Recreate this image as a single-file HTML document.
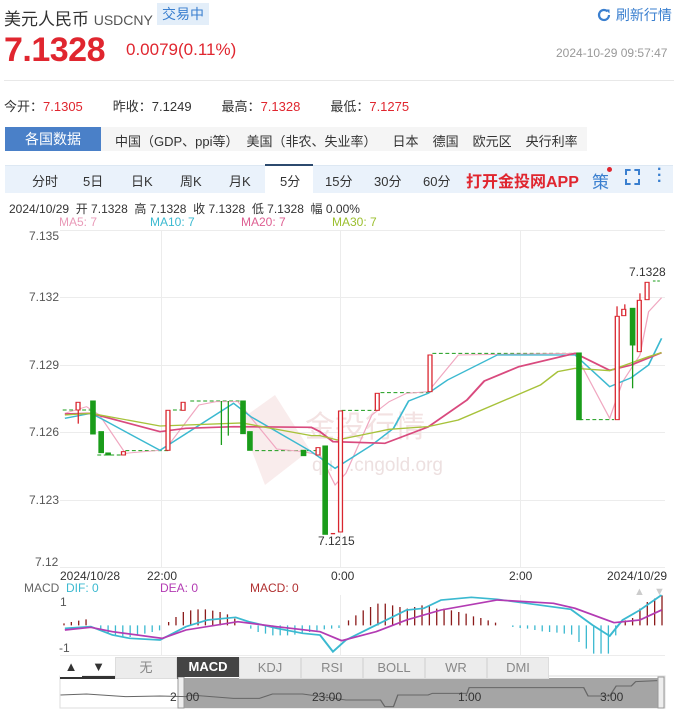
<!DOCTYPE html><html><head><meta charset="utf-8"><style>
*{margin:0;padding:0;box-sizing:border-box}
body{width:678px;height:710px;background:#fff;font-family:"Liberation Sans","Noto Sans CJK SC",sans-serif;position:relative;overflow:hidden;color:#333}
.a{position:absolute;white-space:nowrap}
.r{color:#e0262f}
</style></head><body>
<div class="a" style="left:4px;top:5px;font-size:17px;color:#333">美元人民币 <span style="font-size:14px;color:#555">USDCNY</span></div>
<div class="a" style="left:157px;top:3px;width:52px;height:22px;background:#e3eef9;color:#3a7fcf;font-size:14px;line-height:22px;text-align:center">交易中</div>
<div class="a" style="left:596px;top:5px;font-size:14px;color:#3a7fcf"><svg width="16" height="16" viewBox="0 0 16 16" style="vertical-align:-3px"><path d="M13 8a5 5 0 1 1-1.5-3.6" fill="none" stroke="#3a7fcf" stroke-width="2.2"/><path d="M9.5 2.5h4v4z" fill="#3a7fcf"/></svg> 刷新行情</div>
<div class="a r" style="left:4px;top:31px;font-size:34px;font-weight:bold;letter-spacing:-0.5px">7.1328</div>
<div class="a r" style="left:126px;top:40px;font-size:17px">0.0079(0.11%)</div>
<div class="a" style="left:556px;top:46px;font-size:12px;color:#999">2024-10-29 09:57:47</div>
<div class="a" style="left:4px;top:80px;width:670px;border-top:1px solid #e8e8e8"></div>
<div class="a" style="left:4px;top:96px;font-size:13px">今开：<span class="r">7.1305</span><span style="display:inline-block;width:30px"></span>昨收：7.1249<span style="display:inline-block;width:30px"></span>最高：<span class="r">7.1328</span><span style="display:inline-block;width:30px"></span>最低：<span class="r">7.1275</span></div>
<div class="a" style="left:5px;top:127px;width:96px;height:24px;background:#4a80c8;color:#fff;font-size:14px;line-height:24px;text-align:center">各国数据</div>
<div class="a" style="left:101px;top:127px;width:486px;height:24px;background:#f5f5f5"></div>
<div class="a" style="left:115px;top:131px;font-size:13px;word-spacing:0">中国（GDP、ppi等）<span style="display:inline-block;width:8px"></span>美国（非农、失业率）<span style="display:inline-block;width:16px"></span>日本<span style="display:inline-block;width:14px"></span>德国<span style="display:inline-block;width:14px"></span>欧元区<span style="display:inline-block;width:14px"></span>央行利率</div>
<div class="a" style="left:5px;top:165px;width:668px;height:28px;background:#eaf2fb;border-top:1px solid #dde8f3"></div>
<div class="a" style="left:265px;top:164px;width:48px;height:29px;background:#fff;border-top:2px solid #2c4a6e"></div>
<div class="a" style="left:0;top:171px;font-size:13px;width:678px">
<span class="a" style="left:32px">分时</span><span class="a" style="left:83px">5日</span><span class="a" style="left:131px">日K</span><span class="a" style="left:180px">周K</span><span class="a" style="left:229px">月K</span><span class="a" style="left:280px">5分</span><span class="a" style="left:325px">15分</span><span class="a" style="left:374px">30分</span><span class="a" style="left:423px">60分</span>
<span class="a r" style="left:466px;top:-3px;font-size:16px;font-weight:bold">打开金投网APP</span>
<span class="a" style="left:592px;top:-3px;font-size:17px;color:#3a7fcf">策</span><span class="a" style="left:607px;top:-4px;width:5px;height:5px;border-radius:50%;background:#e0262f"></span>
<span class="a" style="left:625px;top:-2px;width:15px;height:16px;border:2px dashed #3a7fcf;border-width:2px"></span>
<span class="a" style="left:657px;top:-4px;color:#3a7fcf;font-size:16px;line-height:6px;font-weight:bold">·<br>·<br>·</span>
</div>
<div class="a" style="left:9px;top:200px;font-size:12px">2024/10/29 &nbsp;开 7.1328 &nbsp;高 7.1328 &nbsp;收 7.1328 &nbsp;低 7.1328 &nbsp;幅 0.00%</div>
<div class="a" style="left:59px;top:215px;font-size:12px;color:#e99ab8">MA5: 7</div>
<div class="a" style="left:150px;top:215px;font-size:12px;color:#3bb9d0">MA10: 7</div>
<div class="a" style="left:241px;top:215px;font-size:12px;color:#de5f92">MA20: 7</div>
<div class="a" style="left:332px;top:215px;font-size:12px;color:#9bbf2e">MA30: 7</div>
<div class="a" style="left:29px;top:229px;font-size:12px;color:#555;line-height:14px">7.135</div>
<div class="a" style="left:29px;top:290px;font-size:12px;color:#555">7.132</div>
<div class="a" style="left:29px;top:358px;font-size:12px;color:#555">7.129</div>
<div class="a" style="left:29px;top:425px;font-size:12px;color:#555">7.126</div>
<div class="a" style="left:29px;top:493px;font-size:12px;color:#555">7.123</div>
<div class="a" style="left:35px;top:555px;font-size:12px;color:#555">7.12</div>
<div class="a" style="left:629px;top:265px;font-size:12px">7.1328</div>
<div class="a" style="left:318px;top:534px;font-size:12px">7.1215</div>
<div class="a" style="left:312px;top:455px;font-size:19px;color:#ede0e0">qu&nbsp;&nbsp;&nbsp;.cngold.org</div>
<div class="a" style="left:60px;top:569px;font-size:12px">2024/10/28</div>
<div class="a" style="left:147px;top:569px;font-size:12px">22:00</div>
<div class="a" style="left:331px;top:569px;font-size:12px">0:00</div>
<div class="a" style="left:509px;top:569px;font-size:12px">2:00</div>
<div class="a" style="left:607px;top:569px;font-size:12px">2024/10/29</div>
<div class="a" style="left:24px;top:581px;font-size:12px;color:#666">MACD <span style="color:#3bb9d0">&nbsp;DIF: 0</span></div>
<div class="a" style="left:160px;top:581px;font-size:12px;color:#b33bb3">DEA: 0</div>
<div class="a" style="left:250px;top:581px;font-size:12px;color:#b03030">MACD: 0</div>
<div class="a" style="left:60px;top:595px;font-size:12px;color:#555">1</div>
<div class="a" style="left:59px;top:641px;font-size:12px;color:#555">-1</div>
<svg class="a" style="left:0;top:0" width="678" height="710">
<g stroke="#ececec" stroke-width="1">
<line x1="60" y1="230.5" x2="665" y2="230.5"/><line x1="60" y1="297.5" x2="665" y2="297.5"/><line x1="60" y1="365.5" x2="665" y2="365.5"/><line x1="60" y1="432.5" x2="665" y2="432.5"/><line x1="60" y1="500.5" x2="665" y2="500.5"/><line x1="60" y1="567.5" x2="665" y2="567.5"/>
<line x1="161.5" y1="230" x2="161.5" y2="567"/><line x1="340.5" y1="230" x2="340.5" y2="567"/><line x1="520.5" y1="230" x2="520.5" y2="567"/>
<line x1="161.5" y1="595" x2="161.5" y2="655"/><line x1="340.5" y1="595" x2="340.5" y2="655"/><line x1="520.5" y1="595" x2="520.5" y2="655"/>
<line x1="60" y1="655.5" x2="665" y2="655.5"/>
</g>
<path d="M240 420 L275 395 L310 450 L265 485 Z" fill="#f6e4e4" opacity=".7"/>
<text x="305" y="437" font-size="30" fill="#f3e2e2" font-family="Noto Sans CJK SC">金投行情</text>
<g transform="translate(0,225) scale(0.4324,0.3333)" fill="none">
<g stroke="#1a9c1a" stroke-dasharray="9,6" stroke-width="3"><path d="M145 555H215M225 690H290M290 677H390M400 555H430M440 528H560M590 677H740M790 556H870M880 503H995M1000 385H1335M1340 584H1420"/></g>
<polyline stroke="#f0a7c0" stroke-width="3" points="150,565 200,545 230,570 290,685 370,676 390,660 460,540 500,530 550,530 640,672 700,680 740,690 775,780 800,745 860,570 900,530 940,505 990,500 1060,390 1330,385 1410,580 1440,470 1480,390 1500,260 1530,218"/>
<polyline stroke="#3bb9d0" stroke-width="4" points="150,580 210,565 240,585 370,676 540,535 580,575 720,680 775,730 860,660 910,610 945,528 990,505 1035,465 1150,390 1330,390 1410,485 1460,458 1500,420 1530,340"/>
<polyline stroke="#d94a7e" stroke-width="5" points="150,567 210,565 370,620 430,610 540,605 720,607 740,620 770,650 890,655 990,606 1080,525 1120,468 1200,425 1330,385 1410,436 1460,420 1530,383"/>
<polyline stroke="#a7c23a" stroke-width="4" points="150,570 210,565 370,603 560,594 720,632 740,632 780,645 900,613 990,605 1060,585 1250,480 1290,440 1330,430 1410,437 1500,395 1530,383"/>
<g fill="#1a9c1a" stroke="#1a9c1a" stroke-width="3">
<rect x="210" y="528" width="10" height="99"/><rect x="229" y="620" width="10" height="63"/><rect x="245" y="684" width="10" height="6"/>
<line x1="512" y1="528" x2="512" y2="660"/><line x1="528" y1="528" x2="528" y2="632"/>
<rect x="557" y="528" width="10" height="98"/><rect x="573" y="620" width="10" height="56"/><rect x="697" y="676" width="10" height="16"/>
<rect x="747" y="663" width="10" height="265"/><rect x="1334" y="384" width="10" height="200"/>
<rect x="1458" y="250" width="10" height="110"/><line x1="1463" y1="360" x2="1463" y2="490"/>
</g>
<g fill="#fff" stroke="#d9262f" stroke-width="3">
<rect x="176" y="532" width="9" height="23"/><line x1="181" y1="555" x2="181" y2="596"/>
<rect x="281" y="680" width="9" height="10"/><rect x="384" y="556" width="9" height="120"/><rect x="419" y="532" width="9" height="24"/>
<rect x="731" y="668" width="9" height="22"/><rect x="783" y="558" width="9" height="363"/><rect x="868" y="505" width="9" height="51"/>
<rect x="990" y="390" width="9" height="110"/><rect x="1423" y="274" width="9" height="310"/><line x1="1427" y1="244" x2="1427" y2="274"/>
<rect x="1438" y="253" width="9" height="19"/><line x1="1445" y1="238" x2="1445" y2="253"/><rect x="1474" y="226" width="9" height="154"/><line x1="1480" y1="205" x2="1480" y2="226"/><rect x="1492" y="172" width="9" height="52"/>
</g>
<rect x="765" y="924" width="10" height="4" fill="#d9262f"/>
<path d="M1510 168H1530" stroke="#1a9c1a" stroke-width="3" stroke-dasharray="6,4"/>
</g>
<g transform="translate(0,560) scale(0.4324,0.3333)" fill="none">
<g stroke="#8b1a1a" stroke-width="3"><path d="M148 196v-6M165 196v-10M182 196v-14M199 196v-18M390 196v-10M407 196v-25M424 196v-40M441 196v-45M458 196v-48M475 196v-48M492 196v-44M509 196v-40M526 196v-33M543 196v-20M806 196v-15M823 196v-30M840 196v-45M857 196v-55M874 196v-65M891 196v-65M908 196v-60M925 196v-55M942 196v-50M959 196v-55M976 196v-60M993 196v-58M1010 196v-50M1027 196v-50M1044 196v-45M1061 196v-40M1078 196v-35M1095 196v-27M1112 196v-22M1129 196v-15M1146 196v-8M1446 196v-15M1463 196v-22M1480 196v-50M1497 196v-70M1514 196v-80M1531 196v-90"/></g>
<g stroke="#3bb9d0" stroke-width="3"><path d="M233 196v15M250 196v25M267 196v30M284 196v35M301 196v35M318 196v30M335 196v25M352 196v20M369 196v15M580 196v10M597 196v20M614 196v25M631 196v30M648 196v30M665 196v30M682 196v28M699 196v25M716 196v20M733 196v15M750 196v12M767 196v10M784 196v8M1186 196v5M1203 196v8M1220 196v10M1237 196v14M1254 196v18M1271 196v20M1288 196v22M1305 196v25M1322 196v28M1339 196v50M1356 196v70M1373 196v85M1390 196v85M1407 196v85M1424 196v30"/></g>
<polyline stroke="#3bb9d0" stroke-width="5" points="150,205 210,200 260,225 300,235 370,240 430,200 480,180 545,172 575,185 640,205 700,220 740,225 770,275 800,240 870,195 940,150 980,145 1020,120 1090,112 1150,118 1320,148 1370,195 1410,228 1440,180 1480,150 1530,105"/>
<polyline stroke="#b33bb3" stroke-width="5" points="150,210 210,202 260,215 375,235 430,210 550,185 640,200 740,215 790,242 870,215 940,180 1020,150 1150,120 1280,130 1330,145 1420,188 1480,180 1530,150"/>
</g>
<text x="634" y="595" font-size="11" fill="#ccc">▲</text><text x="654" y="595" font-size="11" fill="#ccc">▼</text>
<rect x="60" y="676" width="605" height="32" fill="#fff" stroke="#ddd"/>
<rect x="60" y="676" width="118" height="3" fill="#333"/>
<rect x="183" y="678" width="476" height="30" fill="#a5a5a5"/>
<rect x="178" y="677" width="6" height="31" fill="#eee" stroke="#999"/><rect x="658" y="677" width="6" height="31" fill="#eee" stroke="#999"/>
<g transform="translate(0,560) scale(0.4324,0.3333)" fill="none" stroke="#666" stroke-width="3"><polyline points="140,405 200,402 290,410 370,408 430,410 440,405 540,415 600,415 630,402 700,402 800,420 880,420 890,440 910,440 920,405 990,405 1000,400 1080,400 1085,383 1350,383 1360,408 1410,408 1425,378 1460,378 1470,365 1520,362"/></g>
<text x="170" y="701" font-size="12" fill="#333">2</text><text x="186" y="701" font-size="12" fill="#333">00</text><text x="312" y="701" font-size="12" fill="#333">23:00</text><text x="458" y="701" font-size="12" fill="#333">1:00</text><text x="600" y="701" font-size="12" fill="#333">3:00</text>
</svg>
<div class="a" style="left:60px;top:657px;width:490px;height:20px;font-size:13px;line-height:20px;text-align:center">
<span class="a" style="left:0;width:22px;background:#fff">▲</span><span class="a" style="left:22px;width:33px">▼</span>
<span class="a" style="left:55px;width:62px;background:#ececec;color:#888;border:1px solid #ddd">无</span>
<span class="a" style="left:117px;width:62px;background:#444;color:#fff;font-weight:bold">MACD</span>
<span class="a" style="left:179px;width:62px;background:#ececec;color:#888;border:1px solid #ddd">KDJ</span>
<span class="a" style="left:241px;width:62px;background:#ececec;color:#888;border:1px solid #ddd">RSI</span>
<span class="a" style="left:303px;width:62px;background:#ececec;color:#888;border:1px solid #ddd">BOLL</span>
<span class="a" style="left:365px;width:62px;background:#ececec;color:#888;border:1px solid #ddd">WR</span>
<span class="a" style="left:427px;width:62px;background:#ececec;color:#888;border:1px solid #ddd">DMI</span>
</div>
</body></html>
